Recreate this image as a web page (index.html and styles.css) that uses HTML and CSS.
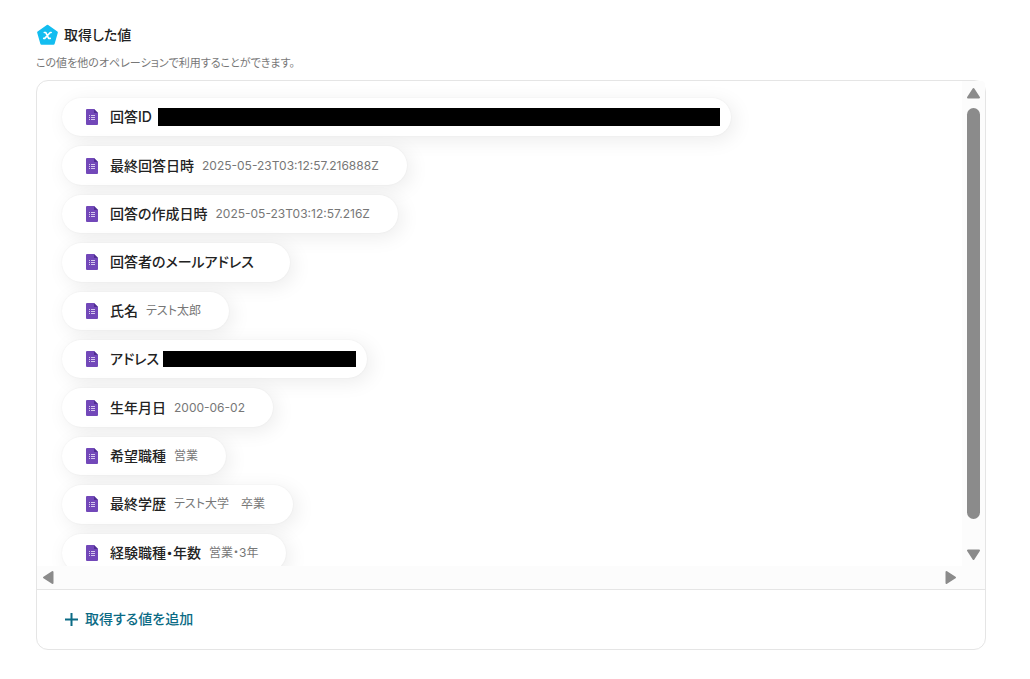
FILE: index.html
```html
<!DOCTYPE html>
<html lang="ja">
<head>
    <meta charset="UTF-8">
    <meta name="viewport" content="width=device-width, initial-scale=1.0">
    <title>取得した値</title>
    <link rel="stylesheet" href="styles.css">
</head>
<body>
    <svg class="sprite" aria-hidden="true">
        <symbol id="form-icon" viewBox="0 0 12 16">
            <path fill="#7248b9" d="M1 0h7l4 4v11a1 1 0 0 1-1 1H1a1 1 0 0 1-1-1V1a1 1 0 0 1 1-1z"/>
            <path fill="#4f2f91" d="M8 0l4 4H8z"/>
            <path fill="#d5c8ec" d="M3 6h1v1H3zM5 6h4v1H5zM3 8h1v1H3zM5 8h4v1H5zM3 10h1v1H3zM5 10h4v1H5z"/>
        </symbol>
    </svg>
    <main class="output">
        <header class="output-header">
            <svg class="output-icon" viewBox="0 0 20 20" aria-hidden="true">
                <path d="M10 2.5 18 8.3 15.2 18H4.8L2 8.3z" fill="#13bdf0" stroke="#13bdf0" stroke-width="2" stroke-linejoin="round"/>
                <path d="M7.2 8.2h1.2l2.6 5.2h1.4M13.2 8.2h-.8l-4.8 5.2h-.9" fill="none" stroke="#fff" stroke-width="1.4" stroke-linecap="round" stroke-linejoin="round"/>
            </svg>
            <h1>取得した値</h1>
        </header>
        <p class="output-note">この値を他のオペレーションで利用することができます。</p>
        <section class="panel">
            <div class="scroll-area">
                <div class="viewport">
                    <ul class="chips">
                        <li class="chip is-masked"><svg class="chip-icon" aria-hidden="true"><use href="#form-icon"/></svg><span class="chip-name">回答ID</span><span class="mask mask-long"></span></li>
                        <li class="chip"><svg class="chip-icon" aria-hidden="true"><use href="#form-icon"/></svg><span class="chip-name">最終回答日時</span><span class="chip-value">2025-05-23T03:12:57.216888Z</span></li>
                        <li class="chip"><svg class="chip-icon" aria-hidden="true"><use href="#form-icon"/></svg><span class="chip-name">回答の作成日時</span><span class="chip-value">2025-05-23T03:12:57.216Z</span></li>
                        <li class="chip"><svg class="chip-icon" aria-hidden="true"><use href="#form-icon"/></svg><span class="chip-name">回答者のメールアドレス</span><span class="chip-value"></span></li>
                        <li class="chip"><svg class="chip-icon" aria-hidden="true"><use href="#form-icon"/></svg><span class="chip-name">氏名</span><span class="chip-value">テスト太郎</span></li>
                        <li class="chip is-masked"><svg class="chip-icon" aria-hidden="true"><use href="#form-icon"/></svg><span class="chip-name">アドレス</span><span class="mask"></span></li>
                        <li class="chip"><svg class="chip-icon" aria-hidden="true"><use href="#form-icon"/></svg><span class="chip-name">生年月日</span><span class="chip-value">2000-06-02</span></li>
                        <li class="chip"><svg class="chip-icon" aria-hidden="true"><use href="#form-icon"/></svg><span class="chip-name">希望職種</span><span class="chip-value">営業</span></li>
                        <li class="chip"><svg class="chip-icon" aria-hidden="true"><use href="#form-icon"/></svg><span class="chip-name">最終学歴</span><span class="chip-value">テスト大学　卒業</span></li>
                        <li class="chip"><svg class="chip-icon" aria-hidden="true"><use href="#form-icon"/></svg><span class="chip-name">経験職種・年数</span><span class="chip-value">営業・3年</span></li>
                    </ul>
                </div>
                <div class="bar bar-y">
                    <button class="arrow" type="button" aria-label="上へ"><svg width="15" height="12" viewBox="0 0 15 12"><path d="M7.5 2l5.5 8.5H2z"/></svg></button>
                    <div class="thumb"></div>
                    <button class="arrow" type="button" aria-label="下へ"><svg width="15" height="12" viewBox="0 0 15 12"><path d="M2 1.5h11L7.5 10z"/></svg></button>
                </div>
                <div class="bar bar-x">
                    <button class="arrow" type="button" aria-label="左へ"><svg width="12" height="15" viewBox="0 0 12 15"><path d="M2 7.5L10.5 2v11z"/></svg></button>
                    <button class="arrow" type="button" aria-label="右へ"><svg width="12" height="15" viewBox="0 0 12 15"><path d="M1.5 2L10 7.5 1.5 13z"/></svg></button>
                </div>
                <div class="bar"></div>
            </div>
            <div class="panel-footer">
                <button class="add" type="button">
                    <svg width="13" height="13" viewBox="0 0 13 13" aria-hidden="true"><path d="M6.5 0v13M0 6.5h13" stroke="currentColor" stroke-width="2"/></svg>
                    取得する値を追加
                </button>
            </div>
        </section>
    </main>
</body>
</html>
```
FILE: styles.css
```css
* {
    box-sizing: border-box;
    margin: 0;
    padding: 0;
}
body {
    background: #fff;
    color: #222;
    font-family: Inter, "Noto Sans CJK JP", sans-serif;
    font-feature-settings: "palt";
    font-size: 14px;
    line-height: 22px;
}
button {
    border: 0;
    background: none;
    color: inherit;
    font: inherit;
    font-feature-settings: inherit;
    cursor: pointer;
}
.sprite {
    position: absolute;
    width: 0;
    height: 0;
}
.output {
    padding: 23px 44px 29px 36px;
}
.output-header {
    display: flex;
    align-items: center;
    gap: 5px;
}
.output-icon {
    width: 23px;
    height: 23px;
}
h1 {
    font-size: 14px;
    font-weight: 500;
    line-height: 22px;
}
.output-note {
    margin: 8px 0;
    color: #777;
    font-size: 11px;
    line-height: 18px;
}
.panel {
    border: 1px solid #e5e5e5;
    border-radius: 12px;
}
.scroll-area {
    display: grid;
    grid-template-columns: 1fr 23px;
    grid-template-rows: 485px 23px;
}
.viewport {
    overflow: hidden;
}
/* rows share the list height evenly */
.chips {
    display: grid;
    grid-auto-rows: 1fr;
    justify-items: start;
    gap: 10px;
    min-height: 474px;
    margin: 17px 25px;
    list-style: none;
}
.chip {
    display: flex;
    align-items: center;
    padding: 0 28px 0 24px;
    border-radius: 20px;
    background: #fff;
    box-shadow: 0 0 2px rgba(0, 0, 0, 0.06), 4px 4px 20px rgba(0, 0, 0, 0.08);
    white-space: nowrap;
}
.chip-icon {
    width: 12px;
    height: 16px;
    margin-right: 12px;
}
.chip-name {
    font-weight: 500;
}
.chip-value {
    margin-left: 8px;
    color: #777;
    font-size: 12px;
}
.is-masked {
    padding-right: 11px;
}
.mask {
    width: 193px;
    height: 16px;
    margin-left: 4px;
    background: #000;
}
.mask-long {
    width: 562px;
    height: 18px;
    margin-left: 6px;
}
.bar {
    display: flex;
    align-items: center;
    justify-content: space-between;
    background: #fcfcfc;
}
.bar-y {
    flex-direction: column;
    padding: 6px 0 5px;
    border-top-right-radius: 4px;
}
.bar-x {
    padding: 0 5px;
}
.arrow {
    display: flex;
}
.arrow path {
    fill: #8b8b8b;
    stroke: #8b8b8b;
    stroke-width: 2;
    stroke-linejoin: round;
}
.thumb {
    width: 13px;
    height: 411px;
    margin: 9px 0 auto;
    border-radius: 7px;
    background: #8b8b8b;
}
.panel-footer {
    padding: 18px 28px 19px;
    border-top: 1px solid #e5e5e5;
}
.add {
    display: flex;
    align-items: center;
    gap: 7px;
    color: #0b6b85;
    font-weight: 500;
}
```
